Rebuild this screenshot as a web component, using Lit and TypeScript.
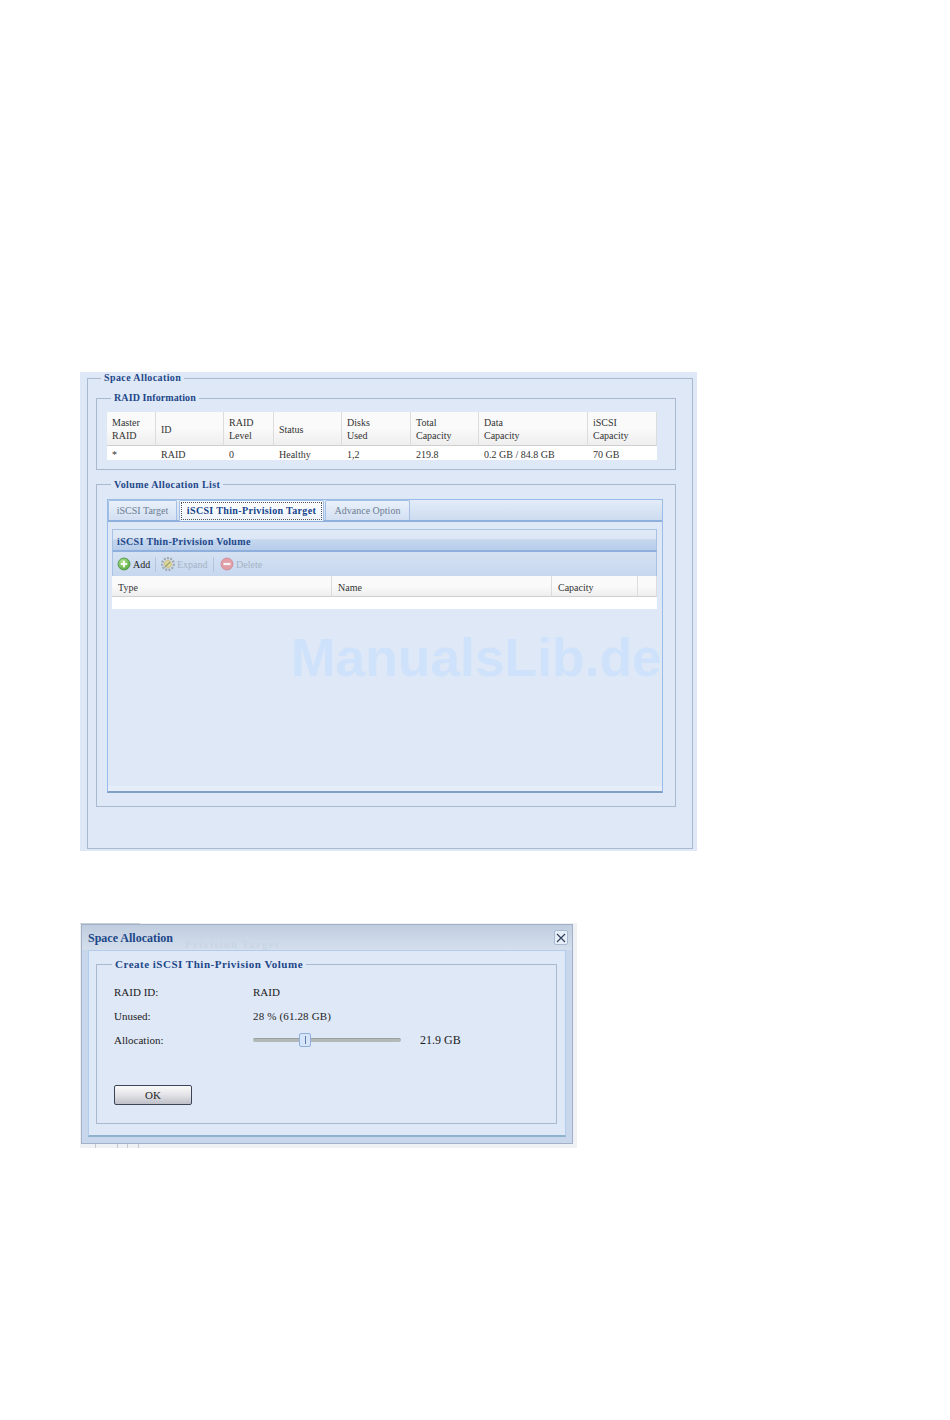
import { LitElement, html, css } from "lit";
import { customElement } from "lit/decorators.js";

const raidHead = [
  ["Master", "RAID"],
  ["ID"],
  ["RAID", "Level"],
  ["Status"],
  ["Disks", "Used"],
  ["Total", "Capacity"],
  ["Data", "Capacity"],
  ["iSCSI", "Capacity"],
];
const raidRow = ["*", "RAID", "0", "Healthy", "1,2", "219.8", "0.2 GB / 84.8 GB", "70 GB"];
const volumeHead = ["Type", "Name", "Capacity", ""];

const addIcon = html`<svg class="icon" viewBox="0 0 14 14" width="14" height="14">
  <defs>
    <radialGradient id="g-add" cx="40%" cy="35%" r="70%">
      <stop offset="0" stop-color="#b9e59a"></stop>
      <stop offset="1" stop-color="#4fa83a"></stop>
    </radialGradient>
  </defs>
  <circle cx="7" cy="7" r="6" fill="url(#g-add)" stroke="#4d8f3f" stroke-width="0.8"></circle>
  <path d="M7 3.8v6.4M3.8 7h6.4" stroke="#f4fbee" stroke-width="2"></path>
</svg>`;

const expandIcon = html`<svg class="icon faded" viewBox="0 0 16 16" width="16" height="16">
  <circle cx="8" cy="8" r="5.8" fill="#e6e6df" stroke="#8f9aa5" stroke-width="2.4" stroke-dasharray="2 1.2"></circle>
  <circle cx="8" cy="8" r="3.6" fill="#ecd873" stroke="#a89c55" stroke-width="0.6"></circle>
  <path d="M5 11l5-5" stroke="#7f8d5a" stroke-width="1.2"></path>
</svg>`;

const deleteIcon = html`<svg class="icon faded" viewBox="0 0 14 14" width="14" height="14">
  <circle cx="7" cy="7" r="6" fill="#ea8a8e" stroke="#c96a70" stroke-width="0.8"></circle>
  <path d="M3.5 7h7" stroke="#fff" stroke-width="2.2"></path>
</svg>`;

const closeIcon = html`<svg viewBox="0 0 10 10" width="10" height="10">
  <path d="M1 1l8 8M9 1l-8 8" stroke="#2f3f5a" stroke-width="1.1"></path>
</svg>`;

@customElement("app-root")
export class AppRoot extends LitElement {
  static styles = css`
    :host {
      display: block;
      width: 950px;
      height: 1420px;
      background: #fff;
      overflow: hidden;
      font-family: "Liberation Serif", "Times New Roman", serif;
      font-size: 10px;
      color: #333;
    }

    .shot {
      position: relative;
      width: 617px;
      height: 479px;
      margin: 372px 0 0 80px;
      padding: 0 4px 2px 7px;
      box-sizing: border-box;
      background: #dfe8f6;
    }

    fieldset {
      margin: 0;
      padding: 0;
      min-width: 0;
      box-sizing: border-box;
      border: 1px solid #a9b9d0;
    }

    legend {
      padding: 0 3px;
      font-weight: bold;
      font-size: 10px;
      line-height: 13px;
      letter-spacing: 0.4px;
      color: #1d4789;
    }

    .fs-outer {
      height: 477px;
      padding-left: 8px;
    }

    .fs-outer > legend {
      margin-left: 5px;
      line-height: 12px;
      padding-bottom: 1px;
    }

    .fs-raid {
      width: 580px;
      height: 78px;
      margin-top: 7px;
      padding: 7px 0 0 10px;
    }

    .fs-volume {
      width: 580px;
      height: 329px;
      margin-top: 8px;
      padding: 8px 0 0 10px;
    }

    .fs-raid > legend {
      margin-left: 4px;
      line-height: 12px;
      padding-bottom: 1px;
      letter-spacing: 0.1px;
    }

    .fs-volume > legend {
      margin-left: 4px;
    }

    .raid-table {
      display: grid;
      grid-template-columns: 49px 68px 50px 68px 69px 68px 109px 69px;
      width: 550px;
    }

    .head {
      display: flex;
      flex-direction: column;
      justify-content: center;
      box-sizing: border-box;
      padding: 1px 0 0 5px;
      line-height: 13px;
      border-right: 1px solid #dcdcdc;
      background: linear-gradient(#fafafa, #fafafa 50%, #eeeeee);
      border-bottom: 1px solid #cfcfcf;
    }

    .raid-table .head {
      height: 34px;
    }

    .cell {
      height: 14px;
      padding-left: 5px;
      box-sizing: border-box;
      line-height: 17px;
      background: #fff;
      white-space: nowrap;
      overflow: hidden;
    }

    .panel {
      width: 556px;
      height: 294px;
      box-sizing: border-box;
      border: 1px solid #99bbe8;
      border-bottom: 2px solid #7f9fc4;
      background: #dfe8f6;
      box-shadow: inset 0 -5px 0 #e5edf8;
    }

    .strip {
      display: flex;
      height: 22px;
      box-sizing: border-box;
      background: linear-gradient(#e3ecf8, #cddcf0);
      border-bottom: 2px solid #8fb0dc;
    }

    .tab {
      display: flex;
      align-items: center;
      justify-content: center;
      height: 20px;
      box-sizing: border-box;
      border: 1px solid #a3bfe4;
      border-bottom: 0;
      border-radius: 2px 2px 0 0;
      background: linear-gradient(#e9f0fa, #d3e0f2);
      color: #6b7c92;
    }

    .tab-target {
      width: 69px;
      margin-right: 2px;
    }

    .tab-active {
      position: relative;
      z-index: 1;
      width: 145px;
      height: 21px;
      margin-right: 1px;
      padding: 1px;
      background: linear-gradient(#fff, #edf3fb);
      color: #15428b;
      font-weight: bold;
      letter-spacing: 0.35px;
    }

    .tab-active span {
      display: flex;
      flex: 1;
      align-self: stretch;
      align-items: center;
      justify-content: center;
      padding-bottom: 2px;
      border: 1px dotted #555;
    }

    .tab-option {
      width: 85px;
    }

    .panel-body {
      padding: 7px 4px 0;
    }

    .vol {
      width: 545px;
    }

    .vol-title {
      height: 23px;
      box-sizing: border-box;
      padding-left: 4px;
      line-height: 24px;
      font-weight: bold;
      letter-spacing: 0.35px;
      color: #1d4789;
      border: 1px solid #a9c2e4;
      border-bottom: 2px solid #8fb0dc;
      background: linear-gradient(#e0e9f6 0, #dde7f5 45%, #c6d7ee 48%, #b7cdea 100%);
    }

    .toolbar {
      display: flex;
      align-items: center;
      height: 24px;
      box-sizing: border-box;
      padding-left: 4px;
      border: 1px solid #a9c2e4;
      border-width: 0 1px;
      background: linear-gradient(#d5e2f3, #c6d7ee);
    }

    .icon {
      flex: none;
    }

    .faded {
      opacity: 0.75;
    }

    .tool {
      display: flex;
      align-items: center;
      gap: 2px;
      color: #222;
    }

    .tool.off {
      color: #a5b3c6;
    }

    .tool-add {
      width: 38px;
    }

    .tool-expand {
      width: 53px;
      margin-left: 4px;
      gap: 1px;
    }

    .tool-delete {
      margin-left: 6px;
    }

    .sep {
      width: 1px;
      height: 15px;
      background: #b4c5dc;
    }

    .vol-table {
      display: grid;
      grid-template-columns: 220px 220px 86px 19px;
    }

    .vol-table .head {
      height: 21px;
      padding: 2px 0 0 6px;
    }

    .vol-row {
      grid-column: 1 / -1;
      height: 12px;
      background: #fff;
    }

    .watermark {
      position: absolute;
      left: 211px;
      top: 256px;
      font-family: "Liberation Sans", Arial, sans-serif;
      font-weight: bold;
      font-size: 53.4px;
      line-height: 60px;
      color: #cfe2fb;
      white-space: nowrap;
    }

    .shot-dialog {
      width: 497px;
      height: 225px;
      margin-top: 72px;
      padding: 1px 4px 4px 1px;
      background:
        linear-gradient(#c4cad4, #c4cad4) 15px 221px / 1px 4px no-repeat,
        linear-gradient(#c4cad4, #c4cad4) 37px 221px / 1px 4px no-repeat,
        linear-gradient(#c4cad4, #c4cad4) 47px 221px / 1px 4px no-repeat,
        linear-gradient(#c4cad4, #c4cad4) 58px 221px / 1px 4px no-repeat,
        linear-gradient(#c9ced7, #c9ced7) 0 0 / 60px 1px no-repeat,
        #f0f1f4;
    }

    .dialog {
      display: flex;
      flex-direction: column;
      width: 492px;
      height: 220px;
      box-sizing: border-box;
      border: 1px solid #a3b1c6;
      background: #c8d7eb;
    }

    .dialog-title {
      position: relative;
      display: flex;
      align-items: center;
      justify-content: space-between;
      height: 25px;
      flex: none;
      padding: 0 4px 0 6px;
      box-sizing: border-box;
      background: linear-gradient(#bfcddf, #d5dfec);
      font-size: 12px;
      font-weight: bold;
      color: #1d4789;
    }

    .ghost {
      position: absolute;
      left: 103px;
      top: 13px;
      font-size: 11px;
      font-weight: bold;
      letter-spacing: 1.2px;
      color: #c8d5e4;
      white-space: nowrap;
    }

    .title-text {
      position: relative;
      padding-top: 2px;
    }

    .close {
      position: relative;
      display: flex;
      align-items: center;
      justify-content: center;
      width: 14px;
      height: 15px;
      box-sizing: border-box;
      border: 1px solid #a9bbd3;
      border-radius: 2px;
      background: #e6eef9;
    }

    .dialog-body {
      width: 478px;
      height: 187px;
      margin-left: 6px;
      padding: 6px 0 0 7px;
      box-sizing: border-box;
      border: 1px solid #b4ccec;
      border-bottom: 2px solid #8fb2cf;
      background: #dfe8f6;
    }

    .fs-create {
      width: 461px;
      height: 167px;
      padding: 9px 0 0 17px;
      font-size: 11px;
      color: #222;
    }

    .fs-create > legend {
      margin-left: -2px;
      font-size: 11px;
      line-height: 14px;
      letter-spacing: 0.5px;
    }

    .form-row {
      display: grid;
      grid-template-columns: 139px auto;
      align-items: center;
      height: 24px;
    }

    .unused {
      letter-spacing: 0.15px;
    }

    .slider-wrap {
      display: flex;
      align-items: center;
      gap: 19px;
    }

    .slider-value {
      font-size: 12px;
    }

    .slider {
      position: relative;
      width: 148px;
      height: 4px;
      border-radius: 2px;
      background: #b4b8b6;
      border-top: 1px solid #9a9f9f;
      box-sizing: border-box;
    }

    .thumb {
      position: absolute;
      left: 46px;
      top: -6px;
      display: flex;
      align-items: center;
      justify-content: center;
      width: 12px;
      height: 14px;
      box-sizing: border-box;
      border: 1px solid #8fb0dc;
      border-radius: 2px;
      background: #d5e4f8;
    }

    .thumb i {
      width: 1px;
      height: 8px;
      background: #5f7fa8;
    }

    .ok {
      display: block;
      width: 78px;
      height: 20px;
      margin: 33px 0 0;
      padding: 0;
      box-sizing: border-box;
      border: 1px solid #3a4658;
      border-radius: 2px;
      background: linear-gradient(#fafafa, #e6e6ea 45%, #bfc0c8);
      font-family: inherit;
      font-size: 11px;
      color: #222;
    }
  `;

  render() {
    return html`
      <section class="shot">
        <fieldset class="fs-outer">
          <legend>Space Allocation</legend>
          <fieldset class="fs-raid">
            <legend>RAID Information</legend>
            <div class="raid-table">
              ${raidHead.map((lines) => html`<div class="head">${lines.map((l) => html`<div>${l}</div>`)}</div>`)}
              ${raidRow.map((v) => html`<div class="cell">${v}</div>`)}
            </div>
          </fieldset>
          <fieldset class="fs-volume">
            <legend>Volume Allocation List</legend>
            <div class="panel">
              <div class="strip">
                <div class="tab tab-target">iSCSI Target</div>
                <div class="tab tab-active"><span>iSCSI Thin-Privision Target</span></div>
                <div class="tab tab-option">Advance Option</div>
              </div>
              <div class="panel-body">
                <div class="vol">
                  <div class="vol-title">iSCSI Thin-Privision Volume</div>
                  <div class="toolbar">
                    <div class="tool tool-add">${addIcon}<span>Add</span></div>
                    <div class="sep"></div>
                    <div class="tool off tool-expand">${expandIcon}<span>Expand</span></div>
                    <div class="sep"></div>
                    <div class="tool off tool-delete">${deleteIcon}<span>Delete</span></div>
                  </div>
                  <div class="vol-table">
                    ${volumeHead.map((h) => html`<div class="head">${h}</div>`)}
                    <div class="vol-row"></div>
                  </div>
                </div>
              </div>
            </div>
          </fieldset>
        </fieldset>
        <div class="watermark">ManualsLib.de</div>
      </section>

      <section class="shot shot-dialog">
        <div class="dialog">
          <div class="dialog-title">
            <div class="ghost">Privision Target</div>
            <span class="title-text">Space Allocation</span>
            <div class="close">${closeIcon}</div>
          </div>
          <div class="dialog-body">
            <fieldset class="fs-create">
              <legend>Create iSCSI Thin-Privision Volume</legend>
              <div class="form-row"><span>RAID ID:</span><span>RAID</span></div>
              <div class="form-row"><span>Unused:</span><span class="unused">28 % (61.28 GB)</span></div>
              <div class="form-row">
                <span>Allocation:</span>
                <div class="slider-wrap">
                  <div class="slider"><div class="thumb"><i></i></div></div>
                  <span class="slider-value">21.9 GB</span>
                </div>
              </div>
              <button class="ok">OK</button>
            </fieldset>
          </div>
        </div>
      </section>
    `;
  }
}
